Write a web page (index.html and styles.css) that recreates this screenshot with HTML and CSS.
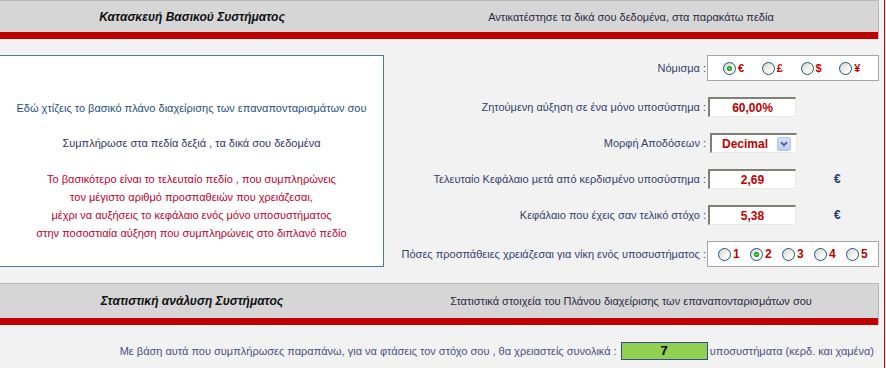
FILE: index.html
```html
<!DOCTYPE html>
<html lang="el">
<head>
	<meta charset="UTF-8">
	<title>Πλάνο διαχείρισης</title>
	<link rel="stylesheet" href="styles.css">
</head>
<body>
<div id="page">
	<!-- κεφαλίδα 1 -->
	<div class="bar">
		<div class="barRow">
			<div class="barTitle">Κατασκευή Βασικού Συστήματος</div>
			<div class="barNote">Αντικατέστησε τα δικά σου δεδομένα, στα παρακάτω πεδία</div>
		</div>
		<div class="barLine"></div>
	</div>

	<div id="setup">
		<div class="info">
			<p class="blue">Εδώ χτίζεις το βασικό πλάνο διαχείρισης των επαναποντ&alpha;ρισμάτων σου</p>
			<p class="navy gap">Συμπλήρωσε στα πεδία δεξιά , τα δικά σου δεδομένα</p>
			<p class="red gap">Το βασικότερο είναι το τελευταίο πεδίο , που συμπληρώνεις<br>
			τον μέγιστο αριθμό προσπαθειών που χρειάζεσαι,<br>
			μέχρι να αυξήσεις το κεφάλαιο ενός μόνο υποσυστήματος<br>
			στην ποσοστιαία αύξηση που συμπληρώνεις στο διπλανό πεδίο</p>
		</div>

		<div id="form">
			<div class="row tall">
				<div class="label">Νόμισμα :</div>
				<div class="ctrl">
					<div class="group money">
						<label class="opt"><input type="radio" name="cur" checked>€</label>
						<label class="opt"><input type="radio" name="cur">£</label>
						<label class="opt"><input type="radio" name="cur">$</label>
						<label class="opt"><input type="radio" name="cur">¥</label>
					</div>
				</div>
			</div>
			<div class="row">
				<div class="label">Ζητούμενη αύξηση σε ένα μόνο υποσύστημα :</div>
				<div class="ctrl"><input class="field" type="text" value="60,00%"></div>
			</div>
			<div class="row">
				<div class="label">Μορφή Αποδόσεων :</div>
				<div class="ctrl">
					<div class="select">
						<span>Decimal</span>
						<span class="arrow"><svg width="8" height="6" viewBox="0 0 8 6"><path d="M1 1.2 L4 4.2 L7 1.2" fill="none" stroke="#4d6185" stroke-width="1.8"/></svg></span>
					</div>
				</div>
			</div>
			<div class="row">
				<div class="label">Τελευταίο Κεφάλαιο μετά από κερδισμένο υποσύστημα :</div>
				<div class="ctrl"><input class="field" type="text" value="2,69"><span class="cur">€</span></div>
			</div>
			<div class="row">
				<div class="label">Κεφάλαιο που έχεις σαν τελικό στόχο :</div>
				<div class="ctrl"><input class="field" type="text" value="5,38"><span class="cur">€</span></div>
			</div>
			<div class="row tall">
				<div class="label">Πόσες προσπάθειες χρειάζεσαι για νίκη ενός υποσυστήματος :</div>
				<div class="ctrl">
					<div class="group tries">
						<label class="opt"><input type="radio" name="tries">1</label>
						<label class="opt"><input type="radio" name="tries" checked>2</label>
						<label class="opt"><input type="radio" name="tries">3</label>
						<label class="opt"><input type="radio" name="tries">4</label>
						<label class="opt"><input type="radio" name="tries">5</label>
					</div>
				</div>
			</div>
		</div>
	</div>

	<!-- κεφαλίδα 2 -->
	<div class="bar">
		<div class="barRow high">
			<div class="barTitle">Στατιστική ανάλυση Συστήματος</div>
			<div class="barNote">Στατιστικά στοιχεία του Πλάνου διαχείρισης των επαναποντ&alpha;ρισμάτων σου</div>
		</div>
		<div class="barLine"></div>
	</div>

	<div class="total">
		<span>Με βάση αυτά που συμπλήρωσες παραπάνω, για να φτάσεις τον στόχο σου , θα χρειαστείς συνολικά :</span>
		<span class="count">7</span>
		<span>υποσυστήματα (κερδ. και χαμένα)</span>
	</div>
</div>
</body>
</html>
```

FILE: styles.css
```css
* {
	padding:0;
	margin:0;
}
body {
	background:#f2f2f2;
	font-family:"Liberation Sans", Arial, sans-serif;
	font-size:11px;
	color:#34406e;
	overflow:hidden;
}
#page {
	width:879px;
	min-height:100vh;
	padding-right:5px;
	border-right:1px solid #c00000;
}
.bar {
	border-top:1px solid #b8b8b8;
	border-right:1px solid #b8b8b8;
}
.barRow {
	display:grid;
	grid-template-columns:384px 1fr;
	align-items:center;
	height:31px;
	background:#d6d6d6;
	text-align:center;
}
.barRow.high {
	height:34px;
}
.barLine {
	height:7px;
	background:#c00000;
}
.barTitle {
	font-size:12px;
	font-weight:bold;
	font-style:italic;
	color:#111;
}
.barNote {
	color:#2a2a44;
}
#setup {
	display:grid;
	grid-template-columns:384px 1fr;
	padding:16px 0;
}
.info {
	background:#fff;
	border:1px solid #4d7c99;
	border-left:none;
	text-align:center;
	line-height:18px;
	padding-top:43px;
}
.info .gap {
	margin-top:17px;
}
.info .blue {
	color:#1e4f80;
}
.info .navy {
	color:#33336a;
}
.info .red {
	color:#c0002a;
	margin-top:18px;
}
#form {
	display:flex;
	flex-direction:column;
	gap:16px;
}
.row {
	display:flex;
	align-items:center;
	height:20px;
}
.row.tall {
	height:26px;
}
.label {
	flex:1;
	text-align:right;
	padding-right:1px;
}
.ctrl {
	width:172px;
	display:flex;
	align-items:center;
}
.field {
	margin-left:1px;
	width:88px;
	height:20px;
	box-sizing:border-box;
	border-style:solid;
	border-width:2px 1px 1px 2px;
	border-color:#7f7f76 #ecebe3 #ecebe3 #7f7f76;
	background:#fff;
	text-align:center;
	font-family:"Liberation Sans", Arial, sans-serif;
	font-size:12px;
	font-weight:bold;
	color:#c00000;
	outline:none;
}
.select {
	margin-left:3px;
	width:87px;
	height:20px;
	box-sizing:border-box;
	border-style:solid;
	border-width:2px 1px 1px 2px;
	border-color:#7f7f76 #ecebe3 #ecebe3 #7f7f76;
	background:#fff;
	display:flex;
	align-items:center;
	justify-content:space-between;
	padding:0 5px 0 10px;
	font-size:12px;
	font-weight:bold;
	color:#c00000;
}
.arrow {
	width:14px;
	height:14px;
	box-sizing:border-box;
	border:1px solid #b1c5f1;
	border-radius:2px;
	background:linear-gradient(#d4e0fd, #b9cdf8);
	display:flex;
	align-items:center;
	justify-content:center;
}
.cur {
	margin-left:38px;
	font-size:12px;
	font-weight:bold;
	color:#1f3a6e;
}
.group {
	width:172px;
	height:26px;
	box-sizing:border-box;
	border:1px solid #a5a5a5;
	background:#fff;
	display:flex;
	align-items:center;
}
.money {
	padding-left:15px;
}
.money .opt {
	width:40px;
	font-size:11px;
}
.tries {
	padding-left:10px;
}
.tries .opt {
	width:33px;
}
.opt {
	display:flex;
	align-items:center;
	gap:2px;
	font-size:12px;
	font-weight:bold;
	color:#c00000;
}
.opt input {
	appearance:none;
	-webkit-appearance:none;
	width:13px;
	height:13px;
	box-sizing:border-box;
	border:1px solid #1c5180;
	border-radius:50%;
	background:linear-gradient(135deg, #d2d2ca 0%, #f4f4f0 55%, #fff 100%);
}
.opt input:checked {
	background:radial-gradient(circle, #6ad46a 0, #21a121 2.2px, transparent 3px),
		linear-gradient(135deg, #d2d2ca 0%, #f4f4f0 55%, #fff 100%);
}
.total {
	display:flex;
	justify-content:flex-end;
	align-items:center;
	padding:17px 5px 0 0;
	color:#4b4f7e;
}
.count {
	width:87px;
	height:18px;
	box-sizing:border-box;
	margin:0 2px 0 4px;
	border:1px solid #2f4f8f;
	background:#92d050;
	text-align:center;
	line-height:16px;
	font-size:13px;
	font-weight:bold;
	color:#000;
}
```
